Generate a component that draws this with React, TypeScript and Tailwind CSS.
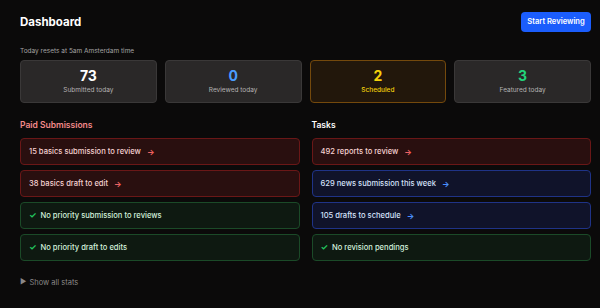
import { Fragment } from "react";

type Tone = "red" | "blue" | "green";

const stats = [
  { value: "73", label: "Submitted today", tone: "plain", valueClass: "text-white" },
  { value: "0", label: "Reviewed today", tone: "plain", valueClass: "text-[#4a9dff]" },
  { value: "2", label: "Scheduled", tone: "warn", valueClass: "text-[#f5d20a]" },
  { value: "3", label: "Featured today", tone: "plain", valueClass: "text-[#22d37a]" },
];

const paid: { text: string; tone: Tone }[] = [
  { text: "15 basics submission to review", tone: "red" },
  { text: "38 basics draft to edit", tone: "red" },
  { text: "No priority submission to reviews", tone: "green" },
  { text: "No priority draft to edits", tone: "green" },
];

const tasks: { text: string; tone: Tone }[] = [
  { text: "492 reports to review", tone: "red" },
  { text: "629 news submission this week", tone: "blue" },
  { text: "105 drafts to schedule", tone: "blue" },
  { text: "No revision pendings", tone: "green" },
];

const toneBox: Record<Tone, string> = {
  red: "border-[#6a1717] bg-[#290f0f] text-[#f6d2d2]",
  blue: "border-[#1f3387] bg-[#10132a] text-[#d6e2fb]",
  green: "border-[#1b4a28] bg-[#0e1911] text-[#d3f0dc]",
};

const toneArrow: Record<Tone, string> = {
  red: "text-[#f06262]",
  blue: "text-[#4a8fff]",
  green: "text-[#22c55e]",
};

function Row({ text, tone }: { text: string; tone: Tone }) {
  return (
    <div
      className={`flex h-[27px] items-center rounded-[4px] border px-2 text-[7.6px] font-medium ${toneBox[tone]}`}
    >
      {tone === "green" ? (
        <Fragment>
          <span className="mr-[4px] text-[8.5px] font-bold text-[#22c55e]">✓</span>
          <span>{text}</span>
        </Fragment>
      ) : (
        <Fragment>
          <span>{text}</span>
          <span className={`ml-[6px] text-[8px] font-bold ${toneArrow[tone]}`}>→</span>
        </Fragment>
      )}
    </div>
  );
}

export default function App() {
  return (
    <div
      className="h-[308px] w-[600px] overflow-hidden bg-[#0b0a0a] pl-5 pr-[9px] text-white"
      style={{ fontFamily: "Inter, 'Noto Sans', sans-serif" }}
    >
      <div className="flex items-center justify-between pt-3">
        <h1 className="text-[11.5px] font-bold leading-5">Dashboard</h1>
        <button className="h-5 w-[70px] rounded-[4px] bg-[#1b5dfc] text-[7.6px] font-semibold text-white">
          Start Reviewing
        </button>
      </div>

      <p className="mt-[14px] text-[6.5px] leading-[10px] text-[#a3a3a3]">Today resets at 5am Amsterdam time</p>

      <div className="mt-[4px] grid grid-cols-4 gap-2">
        {stats.map((s) => (
          <div
            key={s.label}
            className={`flex h-[43px] flex-col items-center justify-center rounded-[4px] border ${
              s.tone === "warn" ? "border-[#74490c] bg-[#22170b]" : "border-[#3a3838] bg-[#2a2828]"
            }`}
          >
            <span className={`text-[14px] font-bold leading-[16px] ${s.valueClass}`}>{s.value}</span>
            <span
              className={`mt-[1px] text-[6.5px] leading-[10px] ${
                s.tone === "warn" ? "font-medium text-[#f5d20a]" : "text-[#b5b3b3]"
              }`}
            >
              {s.label}
            </span>
          </div>
        ))}
      </div>

      <div className="mt-[14px] grid grid-cols-2 gap-3">
        <section>
          <h2 className="text-[8.5px] font-semibold leading-[16px] text-[#f38a8a]">Paid Submissions</h2>
          <div className="mt-[5px] flex flex-col gap-[5px]">
            {paid.map((r) => (
              <Row key={r.text} {...r} />
            ))}
          </div>
        </section>
        <section>
          <h2 className="text-[8.5px] font-semibold leading-[16px] text-white">Tasks</h2>
          <div className="mt-[5px] flex flex-col gap-[5px]">
            {tasks.map((r) => (
              <Row key={r.text} {...r} />
            ))}
          </div>
        </section>
      </div>

      <div className="mt-[16px] flex items-center gap-[3px] text-[7.5px] text-[#8a8888]">
        <span className="text-[7px]">▶</span>
        <span>Show all stats</span>
      </div>
    </div>
  );
}
